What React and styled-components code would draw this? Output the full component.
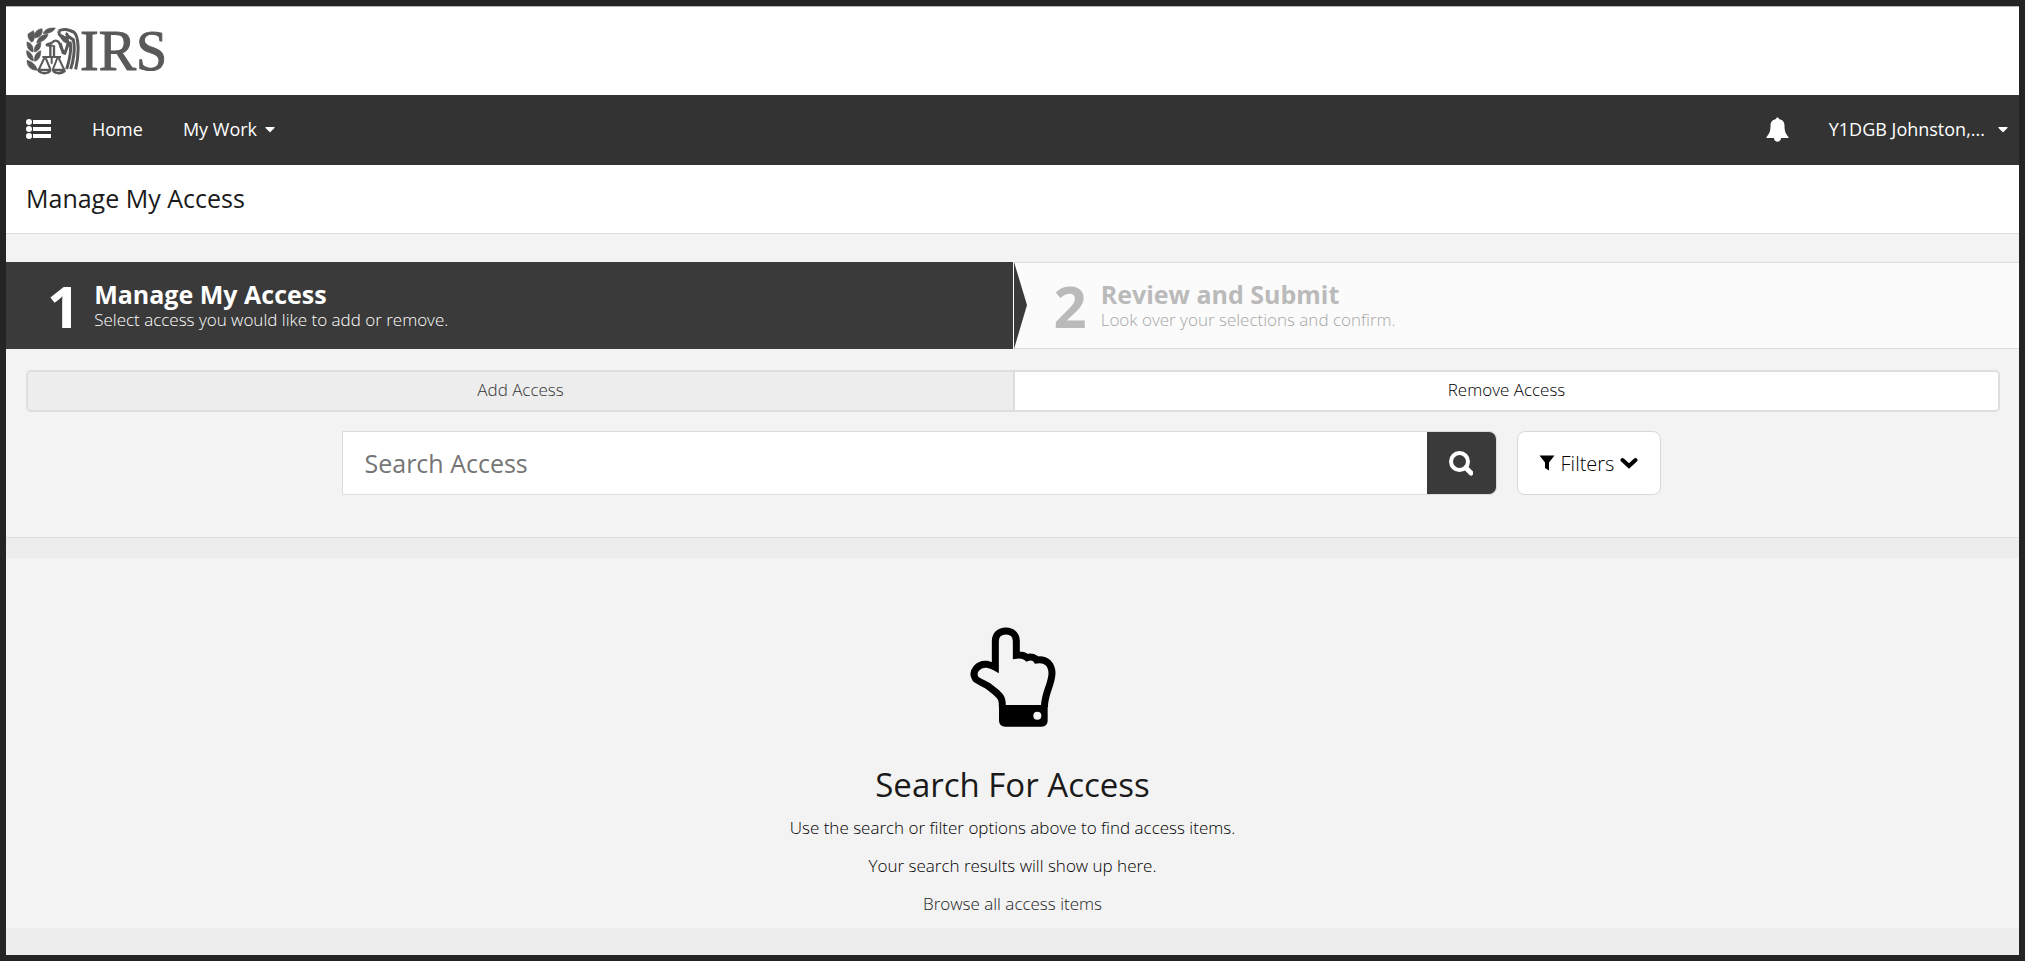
import React from 'react';
import styled, { createGlobalStyle } from 'styled-components';
import { FaCaretDown } from 'react-icons/fa';

const GlobalStyle = createGlobalStyle`
  * { box-sizing: border-box; }
  body { margin: 0; background: #ededed; }
  body, button, input { font-family: "Open Sans", "Noto Sans", sans-serif; }
  button { cursor: pointer; }
  h1, h2, p, ol { margin: 0; padding: 0; }
`;

const Page = styled.div`
  min-height: 100vh;
  display: flex;
  flex-direction: column;
  border: 6px solid #242424;
  background: #ededed;
  color: #000;
`;

const Brand = styled.header`
  height: 89px;
  display: flex;
  align-items: center;
  padding: 0 20px;
  background: #fff;
  border-top: 1px solid #b5b5b5;
`;

const BrandLink = styled.a`
  display: flex;
  align-items: center;
  color: #595959;
  text-decoration: none;
`;

const BrandName = styled.span`
  font-family: "Liberation Serif", serif;
  font-size: 56px;
  line-height: 56px;
  -webkit-text-stroke: 1px currentColor;
`;

const NavBar = styled.nav`
  height: 70px;
  display: flex;
  align-items: center;
  gap: 40px;
  padding: 0 8px 2px 20px;
  background: #333;
`;

const NavLink = styled.a`
  color: #fff;
  font-size: 18px;
  line-height: 24px;
  text-decoration: none;
`;

const NavButton = styled.button`
  display: flex;
  align-items: center;
  gap: ${(p) => p.$gap || 0}px;
  padding: 0;
  border: 0;
  background: none;
  color: #fff;
  font-size: 18px;
  line-height: 24px;
`;

const NavEnd = styled.div`
  display: flex;
  align-items: center;
  gap: 40px;
  margin-left: auto;
`;

const TitleBar = styled.div`
  height: 69px;
  display: flex;
  align-items: center;
  padding: 0 20px 2px;
  background: #fff;
  border-bottom: 1px solid #dcdcdc;
`;

const PageTitle = styled.h1`
  color: #1a1a1a;
  font-size: 25px;
  line-height: 36px;
  font-weight: 400;
`;

const Controls = styled.div`
  padding: 28px 0 42px;
  background: #f3f3f3;
  border-bottom: 1px solid #dedede;
`;

const Steps = styled.ol`
  display: grid;
  grid-template-columns: 1fr 1fr;
  list-style: none;
`;

const Step = styled.li`
  position: relative;
  height: 87px;
  display: flex;
  align-items: center;
  gap: 14px;
  padding-left: 41px;
  color: ${(p) => (p.$active ? '#fff' : '#bababa')};
  background: ${(p) => (p.$active ? '#3a3a3a' : '#fbfbfb')};
  border: solid ${(p) => (p.$active ? '#3a3a3a' : '#dcdcdc')};
  border-width: 1px 0;
`;

const StepArrow = styled.svg`
  position: absolute;
  top: -1px;
  left: 100%;
  z-index: 1;
`;

const StepNumber = styled.span`
  font-size: 58px;
  line-height: 64px;
  font-weight: 700;
`;

const StepTitle = styled.h2`
  font-size: 25px;
  line-height: 28px;
  font-weight: 700;
`;

const StepText = styled.p`
  color: ${(p) => (p.$active ? '#fff' : '#a6a6a6')};
  font-size: 17px;
  line-height: 24px;
  font-weight: 300;
`;

const Tabs = styled.div`
  display: grid;
  grid-template-columns: 1fr 1fr;
  margin: 21px 19px 0 20px;
  border: 2px solid #dedede;
  border-radius: 5px;
  overflow: hidden;
`;

const Tab = styled.button`
  height: 38px;
  padding: 0 0 2px;
  border: 0;
  border-left: ${(p) => (p.$active ? '0' : '2px solid #dcdcdc')};
  background: ${(p) => (p.$active ? '#ededed' : '#fff')};
  color: ${(p) => (p.$active ? '#333' : '#000')};
  font-size: 17px;
  line-height: 24px;
  font-weight: 300;
`;

const SearchRow = styled.form`
  display: flex;
  gap: 20px;
  width: 66.6667%;
  margin: 19px 0 0 16.6667%;
  padding-right: 23px;
`;

const SearchGroup = styled.div`
  flex: 1;
  display: flex;
`;

const SearchInput = styled.input`
  flex: 1;
  min-width: 0;
  height: 64px;
  padding: 0 22px;
  border: 1px solid #dcdcdc;
  border-right: 0;
  border-radius: 0;
  background: #fff;
  color: #222;
  font-size: 25px;
  &::placeholder { color: #757575; opacity: 1; }
`;

const SearchButton = styled.button`
  width: 70px;
  height: 64px;
  display: grid;
  place-items: center;
  padding: 0;
  border: 1px solid #dcdcdc;
  border-left: 0;
  border-radius: 0 8px 8px 0;
  background: #3a3a3a;
`;

const FiltersButton = styled.button`
  width: 144px;
  height: 64px;
  display: flex;
  align-items: center;
  justify-content: center;
  gap: 6px;
  padding: 0;
  border: 1px solid #d8d8d8;
  border-radius: 8px;
  background: #fff;
  color: #000;
  font-size: 20px;
  font-weight: 300;
`;

const Results = styled.main`
  display: flex;
  flex-direction: column;
  align-items: center;
  margin-top: 20px;
  padding: 69px 20px 12px;
  background: #f3f3f3;
  text-align: center;
`;

const ResultsTitle = styled.h2`
  margin: 36px 0 9px;
  color: #1a1a1a;
  font-size: 33px;
  line-height: 44px;
  font-weight: 400;
`;

const ResultsText = styled.p`
  margin-bottom: 14px;
  color: #000;
  font-size: 17px;
  line-height: 24px;
  font-weight: 300;
`;

const BrowseLink = styled.a`
  color: #222;
  font-size: 17px;
  line-height: 24px;
  font-weight: 300;
  text-decoration: none;
`;

const EagleLogo = () => (
  <svg width="54" height="48" viewBox="32 36 162 144" fill="none" stroke="currentColor" aria-hidden="true">
    <g fill="currentColor" stroke="currentColor" strokeWidth="2">
      <path d="M84 56C86 44 100 38 120 39C114 50 102 56 84 56Z" />
      <path d="M60 69C54 52 64 44 80 41C83 55 76 66 60 69Z" />
      <path d="M38 57L54 47C60 59 59 74 50 82C41 76 37 68 38 57Z" />
      <path d="M64 83C68 68 78 60 98 57C96 70 84 80 64 83Z" />
      <path d="M35 81C49 84 55 97 53 111C41 108 34 98 35 81Z" />
      <path d="M57 111C56 95 62 86 76 80C78 96 72 107 57 111Z" />
      <path d="M34 107C46 111 54 122 54 138C40 133 33 122 34 107Z" />
      <path d="M58 139C56 122 62 113 76 107C77 123 71 135 58 139Z" />
      <path d="M35 136C49 139 60 148 67 166C48 166 35 156 35 136Z" />
    </g>
    <path strokeWidth="7" d="M92 90C100 85 112 86 116 78C123 75 131 79 133 87C136 101 144 110 151 116M92 90C99 93 106 92 112 91M105 94V126M116 91V126" />
    <path strokeWidth="6" d="M81 126H137M109 126V146M87 129L70 165M91 129L106 165M126 129L112 165M130 129L147 165" />
    <path strokeWidth="7" d="M68 165C76 178 99 178 106 165M112 165C119 178 141 178 150 165M68 165H106M112 165H150" />
    <path strokeWidth="9" d="M130 48C145 39 158 44 175 51C191 62 192 116 181 163M130 48L132 58L155 75C165 84 150 105 147 119M134 61C142 67 143 76 151 79L160 65L174 74C181 103 173 142 166 162M164 80C170 104 162 136 154 162M141 63C155 76 163 61 151 55M134 84L144 116" />
  </svg>
);

const ListIcon = () => (
  <svg width="26" height="20" viewBox="0 0 26 20" fill="#fff" aria-hidden="true">
    <circle cx="3" cy="3" r="3" />
    <circle cx="3" cy="10" r="3" />
    <circle cx="3" cy="17" r="3" />
    <path d="M7 1H25V5H7ZM7 8H25V12H7ZM7 15H25V19H7Z" />
  </svg>
);

const BellIcon = () => (
  <svg width="23" height="25" viewBox="0 0 23 25" fill="#fff" aria-hidden="true">
    <path d="M10 2C10 0 13 0 13 2C17 3 18.500 5 18.500 9C18.500 15 20 17 22.500 20V21H15C15 26 8 26 8 21H0.500V20C3 17 4.500 15 4.500 9C4.500 5 6 3 10 2Z" />
  </svg>
);

const SearchIcon = () => (
  <svg width="24" height="25" viewBox="0 0 24 25" fill="none" stroke="#fff" aria-hidden="true">
    <circle cx="10.500" cy="10.500" r="8.500" strokeWidth="4" />
    <path d="M17 17L22 22" strokeWidth="5" strokeLinecap="round" />
  </svg>
);

const FunnelIcon = () => (
  <svg width="16" height="16" viewBox="0 0 16 16" aria-hidden="true">
    <path d="M0.500 0.500H15.500L10 7.500V15.500L6 13V7.500Z" />
  </svg>
);

const ChevronIcon = () => (
  <svg width="18" height="12" viewBox="0 0 18 12" fill="none" stroke="#000" strokeWidth="4" strokeLinecap="round" aria-hidden="true">
    <path d="M2.500 3L9 9L15.500 3" />
  </svg>
);

const HandIcon = () => (
  <svg width="87" height="100" viewBox="88 82 261 300" aria-hidden="true">
    <path
      fill="none"
      stroke="#000"
      strokeWidth="21"
      d="M188 322C188 302 188 294 168 277L148 261C136 252 118 247 108 238C93 216 116 190 143 194C153 196 160 199 167 203V124C167 105 180 94 199 94C217 94 230 106 230 124V167C244 165 256 169 262 174C275 169 287 174 291 181C320 176 337 195 337 222C335 258 316 276 314 322"
    />
    <path d="M178 316H324V362Q324 381 305 381H197Q178 381 178 362Z" />
    <circle cx="293" cy="348" r="12" fill="#f3f3f3" />
  </svg>
);

export default function App() {
  return (
    <Page>
      <GlobalStyle />
      <Brand>
        <BrandLink href="#">
          <EagleLogo />
          <BrandName>IRS</BrandName>
        </BrandLink>
      </Brand>
      <NavBar>
        <NavButton type="button" aria-label="Menu"><ListIcon /></NavButton>
        <NavLink href="#">Home</NavLink>
        <NavButton type="button" $gap={5}>My Work <FaCaretDown size={16} /></NavButton>
        <NavEnd>
          <NavButton type="button" aria-label="Notifications"><BellIcon /></NavButton>
          <NavButton type="button" $gap={10}>Y1DGB Johnston,... <FaCaretDown size={16} /></NavButton>
        </NavEnd>
      </NavBar>
      <TitleBar>
        <PageTitle>Manage My Access</PageTitle>
      </TitleBar>
      <Controls>
        <Steps>
          <Step $active aria-current="step">
            <StepNumber>1</StepNumber>
            <div>
              <StepTitle>Manage My Access</StepTitle>
              <StepText $active>Select access you would like to add or remove.</StepText>
            </div>
            <StepArrow width="15" height="87" viewBox="0 0 15 87" aria-hidden="true">
              <path d="M0 0H1V87H0Z" fill="#fff" />
              <path d="M1 0L14 43L1 87Z" fill="#3a3a3a" />
            </StepArrow>
          </Step>
          <Step>
            <StepNumber>2</StepNumber>
            <div>
              <StepTitle>Review and Submit</StepTitle>
              <StepText>Look over your selections and confirm.</StepText>
            </div>
          </Step>
        </Steps>
        <Tabs role="tablist">
          <Tab type="button" role="tab" aria-selected="true" $active>Add Access</Tab>
          <Tab type="button" role="tab" aria-selected="false">Remove Access</Tab>
        </Tabs>
        <SearchRow role="search" onSubmit={(e) => e.preventDefault()}>
          <SearchGroup>
            <SearchInput type="text" aria-label="Search Access" placeholder="Search Access" />
            <SearchButton type="submit" aria-label="Search"><SearchIcon /></SearchButton>
          </SearchGroup>
          <FiltersButton type="button"><FunnelIcon />Filters<ChevronIcon /></FiltersButton>
        </SearchRow>
      </Controls>
      <Results>
        <HandIcon />
        <ResultsTitle>Search For Access</ResultsTitle>
        <ResultsText>Use the search or filter options above to find access items.</ResultsText>
        <ResultsText>Your search results will show up here.</ResultsText>
        <BrowseLink href="#">Browse all access items</BrowseLink>
      </Results>
    </Page>
  );
}
